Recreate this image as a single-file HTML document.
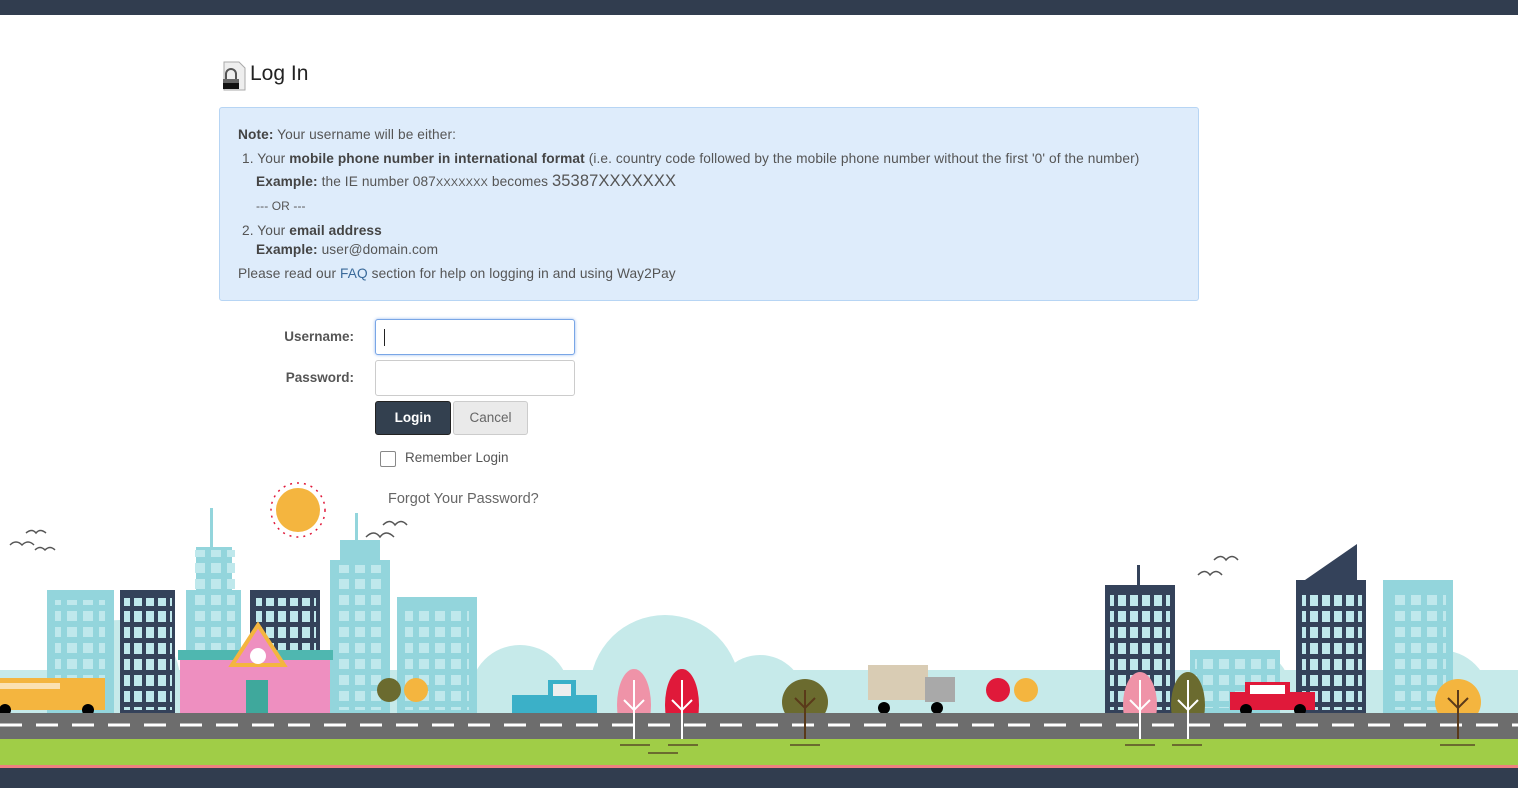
<!DOCTYPE html>
<html><head><meta charset="utf-8"><style>
body{margin:0;width:1518px;height:788px;overflow:hidden;background:#fff;font-family:"Liberation Sans",sans-serif;color:#444;position:relative}
.top{position:absolute;left:0;top:0;width:1518px;height:15px;background:#313d4f}
h1{position:absolute;left:250px;top:62px;margin:0;font-size:21px;font-weight:normal;color:#222}
.note{position:absolute;left:219px;top:107px;width:978px;height:192px;background:#deecfb;border:1px solid #b7d5f4;border-radius:3px;font-size:13.7px;letter-spacing:0.1px;color:#555}
.note div{position:absolute;white-space:nowrap}
b{color:#444}
.lbl{position:absolute;font-size:13.5px;font-weight:bold;color:#555;text-align:right;width:100px}
.inp{position:absolute;left:375px;width:198px;height:34px;border:1px solid #ccc;border-radius:3px;background:#fff}
.btn{position:absolute;top:401px;height:32px;border-radius:3px;font-size:13.5px;text-align:center;line-height:32px}
</style></head><body>
<div class="top"></div>
<svg style="position:absolute;left:221px;top:61px" width="26" height="30"><path d="M3 1h15l6 6v22H3z" fill="#eee" stroke="#aaa"/><rect x="2" y="18" width="16" height="10" fill="#111"/><rect x="2" y="18" width="16" height="4" fill="#666"/><path d="M5 18v-5a5 5 0 0 1 10 0v5" fill="none" stroke="#555" stroke-width="2"/></svg>
<h1>Log In</h1>
<div class="note">
<div style="left:18px;top:19px"><b>Note:</b> Your username will be either:</div>
<div style="left:22px;top:43px">1. Your <b>mobile phone number in international format</b> (i.e. country code followed by the mobile phone number without the first '0' of the number)</div>
<div style="left:36px;top:64px"><b>Example:</b> the IE number 087<span style="font-size:11px">XXXXXXX</span> becomes <span style="font-size:16.5px">35387XXXXXXX</span></div>
<div style="left:36px;top:91px;font-size:12px">--- OR ---</div>
<div style="left:22px;top:115px">2. Your <b>email address</b></div>
<div style="left:36px;top:134px"><b>Example:</b> user@domain.com</div>
<div style="left:18px;top:158px">Please read our <span style="color:#3a6a9a">FAQ</span> section for help on logging in and using Way2Pay</div>
</div>
<div class="lbl" style="left:254px;top:329px">Username:</div>
<div class="lbl" style="left:254px;top:370px">Password:</div>
<div class="inp" style="top:319px;border-color:#79a6e6;box-shadow:0 0 3px #9bbcf0"><div style="position:absolute;left:8px;top:9px;width:1px;height:17px;background:#222"></div></div>
<div class="inp" style="top:360px"></div>
<div class="btn" style="left:375px;width:74px;background:#33404f;color:#fff;font-weight:bold;border:1px solid #222">Login</div>
<div class="btn" style="left:453px;width:73px;background:#eaeaea;color:#666;border:1px solid #ccc">Cancel</div>
<div style="position:absolute;left:380px;top:451px;width:14px;height:14px;border:1px solid #888;border-radius:2px"></div>
<div style="position:absolute;left:405px;top:450px;font-size:13.5px;color:#555">Remember Login</div>
<div style="position:absolute;left:388px;top:491px;font-size:14.5px;color:#666">Forgot Your Password?</div>
<svg style="position:absolute;left:0;top:480px" width="1518" height="308">
<defs>
<pattern id="wl" width="16" height="16" patternUnits="userSpaceOnUse"><rect x="3" y="3" width="10" height="10" fill="#bfe8ec"/></pattern>
<pattern id="wd" width="12" height="16" patternUnits="userSpaceOnUse"><rect x="2" y="3" width="8" height="11" fill="#bfe8ec"/></pattern>
</defs>
<g fill="#c6eaea"><circle cx="120" cy="200" r="60"/><circle cx="520" cy="215" r="50"/><circle cx="665" cy="210" r="75"/><circle cx="760" cy="220" r="45"/><circle cx="1440" cy="220" r="50"/><circle cx="1250" cy="210" r="40"/><rect x="0" y="190" width="1518" height="45"/></g>
<g fill="#93d5dc"><rect x="47" y="110" width="67" height="125"/><rect x="186" y="110" width="55" height="125"/><rect x="196" y="67" width="36" height="50"/><rect x="210" y="28" width="3" height="40"/><rect x="330" y="80" width="60" height="155"/><rect x="340" y="60" width="40" height="22"/><rect x="355" y="33" width="3" height="30"/><rect x="397" y="117" width="80" height="118"/><rect x="1383" y="100" width="70" height="135"/><rect x="1190" y="170" width="90" height="65"/></g>
<g fill="url(#wl)"><rect x="55" y="120" width="50" height="110"/><rect x="190" y="70" width="45" height="160"/><rect x="333" y="85" width="52" height="145"/><rect x="405" y="125" width="64" height="105"/><rect x="1390" y="110" width="56" height="120"/><rect x="1195" y="178" width="80" height="50"/></g>
<g fill="#34425a"><rect x="120" y="110" width="55" height="125"/><rect x="250" y="110" width="70" height="125"/><rect x="1105" y="105" width="70" height="130"/><rect x="1137" y="85" width="3" height="25"/><rect x="1296" y="100" width="70" height="135"/><path d="M1305 100l52-36v36z"/></g>
<g fill="url(#wd)"><rect x="124" y="118" width="48" height="112"/><rect x="256" y="118" width="60" height="112"/><rect x="1110" y="115" width="60" height="115"/><rect x="1302" y="110" width="60" height="120"/></g>
<rect x="180" y="175" width="150" height="60" fill="#ee8fc0"/><rect x="178" y="170" width="155" height="10" fill="#4fb7b0"/><path d="M232 185l26-40 26 40z" fill="#ee8fc0" stroke="#f4b53f" stroke-width="4"/><circle cx="258" cy="176" r="8" fill="#fff"/><rect x="246" y="200" width="22" height="35" fill="#3fa89c"/>
<rect x="0" y="198" width="105" height="32" fill="#f4b53f"/><rect x="0" y="203" width="60" height="6" fill="#fff" opacity=".6"/>
<rect x="868" y="185" width="60" height="35" fill="#d9ccb4"/><rect x="925" y="197" width="30" height="25" fill="#a9a9a9"/>
<rect x="512" y="215" width="85" height="20" fill="#3bb0c8"/><rect x="548" y="200" width="28" height="18" fill="#3bb0c8"/><rect x="553" y="204" width="18" height="12" fill="#eee"/><rect x="510" y="233" width="90" height="4" fill="#e0193a"/>
<rect x="1230" y="212" width="85" height="18" fill="#e0193a"/><rect x="1245" y="202" width="45" height="14" fill="#e0193a"/><rect x="1250" y="205" width="35" height="9" fill="#fff"/>
<circle cx="298" cy="30" r="22" fill="#f4b53f"/><circle cx="298" cy="30" r="27" fill="none" stroke="#e0193a" stroke-dasharray="2 5" stroke-width="1.5"/>
<g fill="none" stroke="#555" stroke-width="1.5"><path d="M10 65q6-6 12 0q6-6 12 0M26 53q6-5 10 0q4-5 10 0M35 70q5-5 10 0q5-5 10 0M366 57q8-8 14 0q6-8 14 0M383 45q7-7 12 0q6-7 12 0M1198 95q7-7 12 0q6-7 12 0M1214 80q7-7 12 0q6-7 12 0"/></g>
<g fill="#000"><circle cx="5" cy="230" r="6"/><circle cx="88" cy="230" r="6"/><circle cx="884" cy="228" r="6"/><circle cx="937" cy="228" r="6"/><circle cx="528" cy="245" r="6"/><circle cx="580" cy="245" r="6"/><circle cx="1246" cy="230" r="6"/><circle cx="1300" cy="230" r="6"/></g>
<ellipse cx="634" cy="225" rx="17" ry="36" fill="#ef93a8"/><ellipse cx="682" cy="225" rx="17" ry="36" fill="#e0193a"/><circle cx="805" cy="222" r="23" fill="#6b6b2f"/><ellipse cx="1140" cy="225" rx="17" ry="33" fill="#ef93a8"/><ellipse cx="1188" cy="225" rx="17" ry="33" fill="#6b6b2f"/><circle cx="1458" cy="222" r="23" fill="#f4b53f"/><circle cx="998" cy="210" r="12" fill="#e0193a"/><circle cx="1026" cy="210" r="12" fill="#f4b53f"/><circle cx="389" cy="210" r="12" fill="#6b6b2f"/><circle cx="416" cy="210" r="12" fill="#f4b53f"/>
<rect x="0" y="233" width="1518" height="26" fill="#6d6d6d"/>
<g stroke="#fff" stroke-width="3" stroke-dasharray="22 14"><line x1="0" y1="245" x2="1518" y2="245"/></g>
<g stroke="#fff" stroke-width="2" fill="none"><path d="M634 200v68M682 200v68M1140 200v68M1188 200v68M624 220l10 10 10-10M672 220l10 10 10-10M1130 220l10 10 10-10M1178 220l10 10 10-10"/></g>
<g stroke="#5a3a1a" stroke-width="2" fill="none"><path d="M805 210v56M795 218l10 10 10-10M1458 210v56M1448 218l10 10 10-10"/></g>
<rect x="0" y="259" width="1518" height="26" fill="#a0cd47"/>
<g stroke="#6b6b2f" stroke-width="2"><path d="M620 265h30M668 265h30M648 273h30M790 265h30M1125 265h30M1172 265h30M1440 265h35"/></g>
<rect x="0" y="285" width="1518" height="3" fill="#ee8080"/>
<rect x="0" y="288" width="1518" height="20" fill="#313d4f"/>
</svg>
</body></html>
